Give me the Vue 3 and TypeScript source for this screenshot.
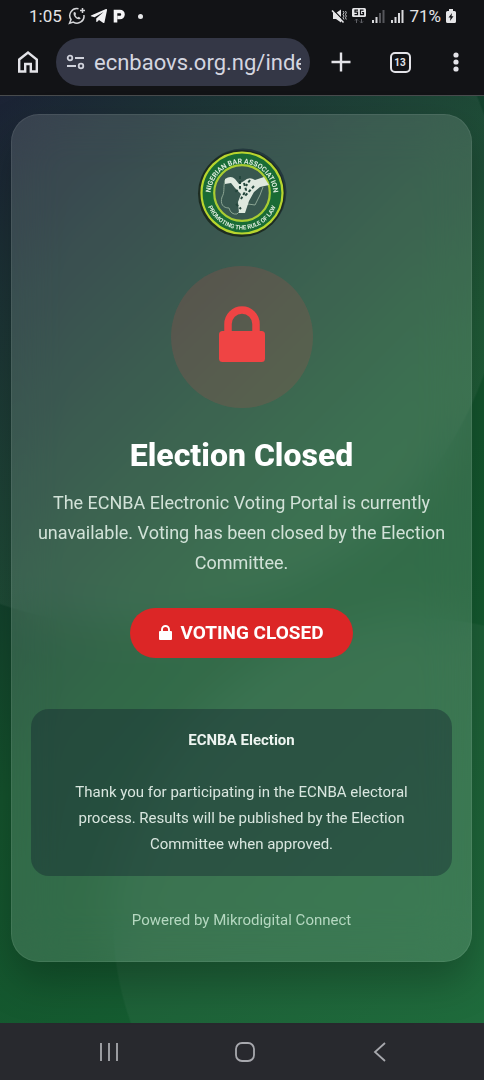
<script setup lang="ts">
const url = 'ecnbaovs.org.ng/index'
const tabs = 13
</script>

<template>
  <div class="phone">
    <header class="chrome">
      <div class="status">
        <div class="status-group">
          <span class="clock">1:05</span>
          <svg width="18" height="18" viewBox="0 0 18 18" fill="none" stroke="#d5d6d9" stroke-width="1.5" aria-hidden="true">
            <path d="M10.5 1.8A7 7 0 0 0 3 12.500L1.500 16.300L5.300 15.100A7 7 0 0 0 15.900 8" />
            <path d="M5.800 5.200C5 7 6 9.500 8 11.200C10 12.800 12 12.700 12.700 11.200L10.800 9.800L9.700 10.600C8.600 10 7.800 9 7.400 7.900L8.100 7L7.100 5Z" fill="#d5d6d9" stroke="none" />
            <path d="M14.500 1v5M12 3.500h5" />
          </svg>
          <svg width="18" height="16" viewBox="0 0 18 16" fill="#f2f2f4" aria-hidden="true">
            <path d="M1 7.500L16 1.100Q17.200 .8 17 2.200L14.500 14.200Q14.200 15.500 13 14.800L9 11.900L7 14Q6.400 14.400 6.300 13.500L6.200 10.500L13.500 4L4.600 9.300L1 8.300Q.5 7.900 1 7.500Z" />
          </svg>
          <svg width="14" height="16" viewBox="0 0 14 16" aria-hidden="true">
            <path d="M3.500 14.500V3.500H8a3 3 0 0 1 0 6H5.500" fill="none" stroke="#f5f5f7" stroke-width="3.600" />
          </svg>
          <span class="dot"></span>
        </div>
        <div class="status-group right">
          <svg width="16" height="16" viewBox="0 0 16 16" aria-hidden="true">
            <path d="M2 5h3L10 1.500v13L5 11H2Z" fill="#e6e6e8" />
            <path d="M2.300 2L13 13" stroke="#121316" stroke-width="1.200" />
            <path d="M1 2.500L12.500 14.500" stroke="#e6e6e8" stroke-width="1.600" />
            <path d="M12 3l1 1.700-1 1.700 1 1.700-1 1.700 1 1.700M14.500 3l.8 1.700-.8 1.700.8 1.700-.8 1.700.8 1.700" fill="none" stroke="#c9cacd" />
          </svg>
          <svg width="14" height="16" viewBox="0 0 14 16" aria-hidden="true">
            <rect x="0" y="0" width="14" height="9" rx="1.500" fill="#e6e6e8" />
            <path d="M6 2.200H3v2h2.500v2.500H2.500M11.500 2.200H8.500v4.500h3V4.700H10" fill="none" stroke="#121316" stroke-width="1.200" />
            <path d="M4.500 15v-4M3 12.500L4.500 11L6 12.500M9.500 11v4M8 13.500L9.500 15L11 13.500" fill="none" stroke="#606167" />
          </svg>
          <svg width="14" height="14" viewBox="0 0 14 14" aria-hidden="true">
            <path d="M1 11h2v3H1zM4.500 8h2v6h-2z" fill="#d9dadd" />
            <path d="M8 4h2v10H8zM11.500 1h2v13h-2z" fill="#55565b" />
          </svg>
          <svg width="14" height="14" viewBox="0 0 14 14" fill="#d9dadd" aria-hidden="true">
            <path d="M1 11h2v3H1zM4.500 8h2v6h-2zM8 4h2v10H8zM11.500 1h2v13h-2z" />
          </svg>
          <span class="battery">71%</span>
          <svg width="10" height="14" viewBox="0 0 10 14" aria-hidden="true">
            <path d="M3 0h4v2h1.500Q10 2 10 3.500v9Q10 14 8.500 14h-7Q0 14 0 12.500v-9Q0 2 1.500 2H3Z" fill="#e6e6e8" />
            <path d="M6 4L2.500 8.500h2L4 12L7.500 7.300h-2Z" fill="#121316" />
          </svg>
        </div>
      </div>
      <div class="toolbar">
        <button class="tool" type="button" aria-label="Home">
          <svg width="22" height="24" viewBox="0 0 22 24" fill="none" stroke="#e3e3e8" stroke-width="2.400">
            <path d="M2.200 9.500L11 2.500L19.800 9.500V21.500H13.800V14H8.200V21.500H2.200Z" />
          </svg>
        </button>
        <div class="omnibox">
          <svg width="20" height="16" viewBox="0 0 20 16" fill="none" stroke="#d0d2dc" stroke-width="1.800" aria-hidden="true">
            <circle cx="4" cy="4" r="2.300" /><path d="M9 4h9M1 12h9" /><circle cx="15" cy="12" r="2.300" />
          </svg>
          <input class="url" type="text" aria-label="Address" :value="url" />
        </div>
        <button class="tool plus" type="button" aria-label="New tab">
          <svg width="22" height="22" viewBox="0 0 22 22" stroke="#e3e3e8" stroke-width="2.400"><path d="M11 1.500v19M1.500 11h19" /></svg>
        </button>
        <button class="tool" type="button" aria-label="Tabs"><span class="tabs">{{ tabs }}</span></button>
        <button class="tool menu" type="button" aria-label="Menu">
          <svg width="6" height="20" viewBox="0 0 6 20" fill="#e3e3e8"><circle cx="3" cy="3" r="2.600" /><circle cx="3" cy="10" r="2.600" /><circle cx="3" cy="17" r="2.600" /></svg>
        </button>
      </div>
    </header>

    <main class="page">
      <section class="card">
        <svg class="logo" width="90" height="90" viewBox="0 0 90 90" role="img" aria-label="Nigerian Bar Association">
          <defs>
            <path id="arc-top" d="M13.500 47A31.500 31.500 0 1 1 76.500 47" />
            <path id="arc-bottom" d="M8.500 45A36.500 36.500 0 0 0 81.500 45" />
          </defs>
          <circle cx="46" cy="44" r="43.500" fill="#24383e" />
          <circle cx="44.500" cy="45.500" r="43.500" fill="#1d2c22" />
          <circle cx="45" cy="45" r="40.500" fill="#196b35" stroke="#b8d52e" stroke-width="2.200" />
          <circle cx="45" cy="45" r="27.800" fill="#38574f" stroke="#a9cc32" stroke-width="2.200" />
          <text class="seal"><textPath href="#arc-top" startOffset="50%" text-anchor="middle">NIGERIAN BAR ASSOCIATION</textPath></text>
          <text class="seal motto"><textPath href="#arc-bottom" startOffset="50%" text-anchor="middle">PROMOTING THE RULE OF LAW</textPath></text>
          <path d="M28 32C26 40 28 44 25 49C23 56 26 60 32 60Q34 67 40 66L45 61L51 56L58 57L63 47L66 39" fill="none" stroke="#8ba593" />
          <path d="M28 31Q34 27 38 31L42 36L47 33Q52 28 58 32L67 29L72 37L63 39L57 44L52 53L48 65H42L41 54L44 46L38 40L34 35L28 36Z" fill="#dfe9df" />
          <path d="M43 28V40L37 45M47 35L49 42L44 51M53 32L49 38M39 56L44 61M57 38L48 48" fill="none" stroke="#23463c" stroke-width="2" stroke-dasharray="3 2" />
        </svg>
        <div class="lock-disc">
          <svg width="46" height="62" viewBox="0 0 46 62" aria-hidden="true">
            <rect x="0" y="25" width="46" height="31" rx="3.500" fill="#ef4444" />
            <path d="M9 27V18a14 14 0 0 1 28 0V27" fill="none" stroke="#ef4444" stroke-width="7.500" />
          </svg>
        </div>
        <h1>Election Closed</h1>
        <p class="lead">The ECNBA Electronic Voting Portal is currently unavailable. Voting has been closed by the Election Committee.</p>
        <div class="pill">
          <svg width="13" height="16" viewBox="0 0 13 16" aria-hidden="true">
            <rect y="6" width="13" height="9" rx="1" fill="#fff" />
            <path d="M3 7V4.500a3.500 3.500 0 0 1 7 0V7" fill="none" stroke="#fff" stroke-width="1.900" />
          </svg>
          <span>VOTING CLOSED</span>
        </div>
        <div class="notice">
          <strong>ECNBA Election</strong>
          <p>Thank you for participating in the ECNBA electoral process. Results will be published by the Election Committee when approved.</p>
        </div>
        <footer>Powered by Mikrodigital Connect</footer>
      </section>
    </main>

    <nav class="navbar" aria-label="System">
      <button type="button" aria-label="Recent apps">
        <svg width="20" height="20" viewBox="0 0 20 20" stroke="#a7a8ad" stroke-width="1.800"><path d="M2 1v18M10 1v18M18 1v18" /></svg>
      </button>
      <button type="button" aria-label="Home screen">
        <svg width="20" height="20" viewBox="0 0 20 20" fill="none" stroke="#a7a8ad" stroke-width="1.800"><rect x="1" y="1" width="18" height="18" rx="6" /></svg>
      </button>
      <button type="button" aria-label="Back">
        <svg width="20" height="20" viewBox="0 0 20 20" fill="none" stroke="#a7a8ad" stroke-width="1.800"><path d="M15 1L5 10L15 19" /></svg>
      </button>
    </nav>
  </div>
</template>

<style>
body { margin: 0; background: #28292e; }
</style>

<style scoped>
* { box-sizing: border-box; }
.phone { min-height: 100vh; display: flex; flex-direction: column; font-family: Roboto, "Liberation Sans", sans-serif; color: #fff; }
button { border: 0; padding: 0; background: none; display: flex; align-items: center; justify-content: center; }
svg { display: block; flex: none; }
.chrome { height: 96px; background: #121316; border-bottom: 1px solid #484b4d; }
.status { height: 32px; padding: 0 28px 0 29px; display: flex; justify-content: space-between; align-items: center; }
.status-group { display: flex; align-items: center; gap: 4px; }
.status-group.right { gap: 5px; }
.clock, .battery { font-size: 17px; color: #e3e3e6; }
.clock { margin-right: 2px; }
.dot { width: 5px; height: 5px; border-radius: 50%; background: #e6e6e8; margin-left: 8px; }
.toolbar { height: 60px; padding: 0 12px; display: flex; align-items: center; }
.tool { width: 32px; height: 40px; }
.omnibox { flex: 1; min-width: 0; height: 48px; margin-left: 12px; border-radius: 24px; background: #343746; display: flex; align-items: center; gap: 8px; padding: 0 9px 0 10px; }
.url { flex: 1; min-width: 0; border: 0; padding: 0; background: none; color: #d4d6e0; font-family: Roboto, sans-serif; font-size: 22px; }
.plus { margin: 0 27px 0 15px; }
.menu { margin-left: 24px; }
.tabs { width: 21px; height: 21px; border: 2px solid #e3e3e8; border-radius: 5px; font: 700 10px/17px Roboto, sans-serif; color: #e3e3e8; text-align: center; }

.page {
  flex: 1;
  padding: 18px 12px 61px 11px;
  background:
    radial-gradient(circle at 26% 16%, rgba(255, 255, 255, .05) 0 380px, transparent 382px),
    radial-gradient(circle at 86% 89%, rgba(255, 255, 255, .04) 0 302px, transparent 304px),
    linear-gradient(135deg, #0f172a 0%, #14532d 50%, #166534 100%);
}
.card { display: flex; flex-direction: column; align-items: center; padding: 33px 19px 28px; border: 1px solid rgba(255, 255, 255, .08); border-radius: 28px; background: rgba(255, 255, 255, .13); backdrop-filter: blur(24px); box-shadow: 0 20px 40px rgba(0, 0, 0, .25); text-align: center; }
.seal { font: 700 7px Roboto, sans-serif; fill: #dcebdc; }
.motto { font-size: 6px; }
.lock-disc { width: 142px; height: 142px; margin-top: 28px; border-radius: 50%; background: rgba(239, 68, 68, .16); display: flex; align-items: center; justify-content: center; }
h1 { margin: 26px 0 12px; font-size: 32px; line-height: 42px; font-weight: 800; }
.lead { margin: 0; font-size: 18px; line-height: 30px; color: #d2e2d8; }
.pill { height: 50px; margin-top: 30px; padding: 0 29px; border-radius: 25px; background: #dc2626; display: flex; align-items: center; gap: 8px; font-size: 19px; line-height: 22px; font-weight: 700; }
.notice { align-self: stretch; margin-top: 51px; padding: 18px 20px 19px; border-radius: 18px; background: rgba(15, 23, 42, .35); color: #d9e6df; font-size: 15px; line-height: 26px; }
.notice strong { color: #eef5f1; }
.notice p { margin: 26px 0 0; }
footer { margin-top: 31px; font-size: 15px; line-height: 26px; color: #b5d8c0; }
.navbar { height: 57px; background: #28292e; display: flex; justify-content: space-between; align-items: center; padding: 0 89px 0 94px; }
.navbar button { width: 30px; height: 40px; }
</style>
